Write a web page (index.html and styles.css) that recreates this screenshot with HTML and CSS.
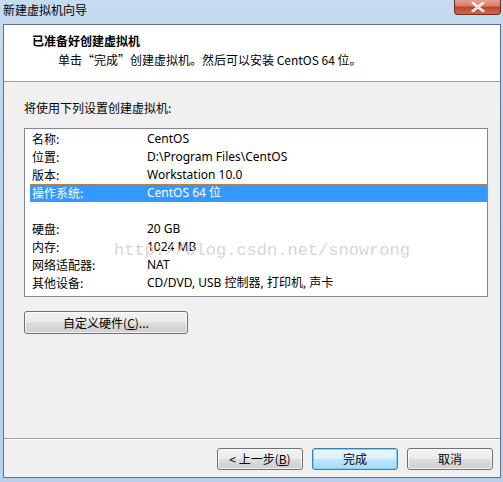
FILE: index.html
```html
<!DOCTYPE html>
<html lang="zh-CN">
<head>
<meta charset="utf-8">
<title>新建虚拟机向导</title>
<link rel="stylesheet" href="styles.css">
</head>
<body>
<div class="window">
  <div class="titlebar">
    <span class="title">新建虚拟机向导</span>
    <button class="close" aria-label="关闭">
      <svg width="14" height="10" viewBox="0 0 14 10"><path d="M2 1 L12 9 M12 1 L2 9" stroke="#fff" stroke-width="2.6" stroke-linecap="square"/><path d="M2 1 L12 9 M12 1 L2 9" stroke="#7a3a3a" stroke-width="0.6" fill="none" opacity="0.4"/></svg>
    </button>
  </div>
  <div class="client">
    <div class="header">
      <div class="h-title">已准备好创建虚拟机</div>
      <div class="h-sub">单击“完成”创建虚拟机。然后可以安装 CentOS 64 位。</div>
    </div>
    <div class="content">
      <div class="section-label">将使用下列设置创建虚拟机:</div>
      <div class="listbox">
        <div class="row"><span class="k">名称:</span><span class="v">CentOS</span></div>
        <div class="row"><span class="k">位置:</span><span class="v">D:\Program Files\CentOS</span></div>
        <div class="row"><span class="k">版本:</span><span class="v">Workstation 10.0</span></div>
        <div class="row selected"><span class="k">操作系统:</span><span class="v">CentOS 64 位</span></div>
        <div class="row"><span class="k"></span><span class="v"></span></div>
        <div class="row"><span class="k">硬盘:</span><span class="v">20 GB</span></div>
        <div class="row"><span class="k">内存:</span><span class="v">1024 MB</span></div>
        <div class="row"><span class="k">网络适配器:</span><span class="v">NAT</span></div>
        <div class="row"><span class="k">其他设备:</span><span class="v">CD/DVD, USB 控制器, 打印机, 声卡</span></div>
        <div class="watermark">http://blog.csdn.net/snowrong</div>
      </div>
      <button class="btn custom">自定义硬件(<u>C</u>)...</button>
    </div>
    <div class="footer">
      <button class="btn">&lt; 上一步(<u>B</u>)</button>
      <button class="btn default">完成</button>
      <button class="btn">取消</button>
    </div>
  </div>
</div>
</body>
</html>
```
FILE: styles.css
```css
* { box-sizing: border-box; }
html, body { margin: 0; padding: 0; }
body {
  width: 503px;
  height: 482px;
  overflow: hidden;
  font-family: "Noto Sans", "Noto Sans CJK SC", sans-serif;
  font-size: 12px;
  color: #000;
}
.window {
  width: 503px;
  height: 482px;
  display: flex;
  flex-direction: column;
  background: linear-gradient(180deg, #c6daf0 0%, #bcd3ec 40%, #b9d1ea 100%);
  padding: 0 2px 4px 3px;
}
.titlebar {
  height: 24px;
  flex: none;
  position: relative;
  display: flex;
  align-items: flex-start;
}
.title {
  font-family: "Noto Sans CJK SC", sans-serif;
  font-size: 12px;
  line-height: 20px;
  padding-left: 0;
  color: #000;
}
.close {
  position: absolute;
  right: 0;
  top: -1px;
  width: 47px;
  height: 16px;
  border: 1px solid #6b2a22;
  border-top: none;
  border-radius: 0 0 4px 4px;
  background: linear-gradient(180deg, #e8a494 0%, #d9806c 45%, #c1442c 55%, #cf6a4c 100%);
  display: flex;
  align-items: center;
  justify-content: center;
  padding: 0;
}
.client {
  flex: 1;
  display: flex;
  flex-direction: column;
  border: 1px solid #5f7289;
  background: #f0f0f0;
}
.header {
  height: 57px;
  flex: none;
  background: #fff;
  border-bottom: 1px solid #a0a0a0;
  padding: 7px 0 0 28px;
  font-family: "Noto Sans CJK SC", sans-serif;
}
.h-title {
  font-weight: bold;
  font-size: 12px;
  line-height: 18px;
}
.h-sub {
  padding-left: 26px;
  line-height: 18px;
  margin-top: 1px;
}
.content {
  flex: 1;
  padding: 17px 13px 0 20px;
  display: flex;
  flex-direction: column;
  align-items: flex-start;
}
.section-label {
  font-family: "Noto Sans CJK SC", sans-serif;
  line-height: 18px;
  margin-bottom: 11px;
}
.listbox {
  position: relative;
  width: 464px;
  height: 169px;
  border: 1px solid #828790;
  background: #fff;
  padding: 1px 0 0 5px;
  margin-bottom: 14px;
  overflow: hidden;
}
.row {
  display: flex;
  height: 18px;
  line-height: 18px;
  width: 457px;
  padding-left: 2px;
  font-family: "Noto Sans", "Noto Sans CJK SC", sans-serif;
}
.row .k {
  width: 115px;
  flex: none;
  font-family: "Noto Sans CJK SC", sans-serif;
}
.row .v { white-space: nowrap; }
.row.selected {
  background: #3399ff;
  color: #fff;
  outline: 1px dotted #c08040;
  outline-offset: -1px;
}
.watermark {
  position: absolute;
  left: 89px;
  top: 111px;
  font-family: "Liberation Mono", monospace;
  font-size: 17px;
  line-height: 22px;
  color: #d6d6d6;
  pointer-events: none;
  white-space: nowrap;
}
.btn {
  font-family: "Noto Sans CJK SC", sans-serif;
  font-size: 12px;
  color: #000;
  height: 22px;
  width: 86px;
  padding: 0;
  border: 1px solid #707070;
  border-radius: 3px;
  background: linear-gradient(180deg, #f2f2f2 0%, #ebebeb 48%, #dddddd 52%, #cfcfcf 100%);
  box-shadow: inset 0 0 0 1px rgba(255,255,255,0.7);
  line-height: 18px;
}
.btn u { text-decoration: underline; }
.btn.custom {
  width: 164px;
  height: 23px;
}
.btn.default {
  border-color: #3c7fb1;
  background: linear-gradient(180deg, #eaf6fd 0%, #d9f0fc 48%, #bee6fd 52%, #a7d9f5 100%);
  box-shadow: inset 0 0 0 1px #7fd5f8;
}
.footer {
  flex: none;
  height: 39px;
  border-top: 1px solid #a0a0a0;
  box-shadow: inset 0 1px 0 #fff;
  display: flex;
  justify-content: flex-end;
  align-items: flex-start;
  gap: 9px;
  padding: 9px 7px 0 0;
}
```
